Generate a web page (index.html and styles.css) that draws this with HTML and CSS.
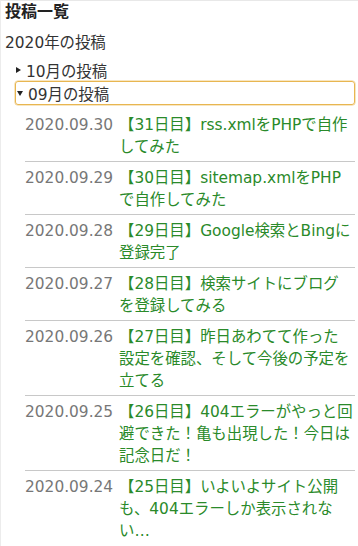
FILE: index.html
```html
<!DOCTYPE html>
<html lang="ja">
<head>
<meta charset="utf-8">
<link rel="stylesheet" href="styles.css">
</head>
<body>
<div class="panel">
  <h2 class="title">投稿一覧</h2>
  <div class="year">2020年の投稿</div>
  <div class="month"><span class="tri-right"></span><span>10月の投稿</span></div>
  <div class="month open"><span class="tri-down"></span><span>09月の投稿</span></div>
  <ul class="posts">
    <li class="post"><span class="date">2020.09.30</span><a class="link">【31日目】rss.xmlをPHPで自作してみた</a></li>
    <li class="post"><span class="date">2020.09.29</span><a class="link">【30日目】sitemap.xmlをPHPで自作してみた</a></li>
    <li class="post"><span class="date">2020.09.28</span><a class="link">【29日目】Google検索とBingに登録完了</a></li>
    <li class="post"><span class="date">2020.09.27</span><a class="link">【28日目】検索サイトにブログを登録してみる</a></li>
    <li class="post"><span class="date">2020.09.26</span><a class="link">【27日目】昨日あわてて作った設定を確認、そして今後の予定を立てる</a></li>
    <li class="post"><span class="date">2020.09.25</span><a class="link">【26日目】404エラーがやっと回避できた！亀も出現した！今日は記念日だ！</a></li>
    <li class="post last"><span class="date">2020.09.24</span><a class="link">【25日目】いよいよサイト公開も、404エラーしか表示されない…</a></li>
  </ul>
</div>
</body>
</html>
```

FILE: styles.css
```css
html, body {
  margin: 0;
  padding: 0;
  background: #fff;
}
body {
  font-family: "DejaVu Sans", "Noto Sans CJK JP", sans-serif;
  font-size: 15.4px;
  color: #333;
  width: 358px;
  height: 546px;
  overflow: hidden;
}
.panel {
  border-left: 1px solid #ececec;
  border-top: 1px solid #e8e8e8;
  padding-left: 4px;
  height: 545px;
}
.title {
  margin: 0;
  font-size: 16px;
  font-weight: bold;
  line-height: 22px;
  color: #222;
}
.year {
  margin-top: 9px;
  line-height: 22px;
  color: #333;
}
.month {
  display: flex;
  align-items: center;
  gap: 5px;
  margin-left: 10px;
  margin-right: 3px;
  padding-left: 1px;
  height: 22px;
  margin-top: 5px;
  color: #333;
}
.month.open {
  margin-top: 0;
  border: 1px solid #e8b651;
  border-radius: 3px;
  box-shadow: 0 0 0 0.5px #f0cd86;
  padding-left: 0;
}
.tri-right {
  width: 0;
  height: 0;
  border-left: 5px solid #222;
  border-top: 3px solid transparent;
  border-bottom: 3px solid transparent;
}
.tri-down {
  width: 0;
  height: 0;
  border-top: 5px solid #222;
  border-left: 3px solid transparent;
  border-right: 3px solid transparent;
  margin-left: 1px;
}
.posts {
  list-style: none;
  margin: 4px 3px 0 20px;
  padding: 0;
}
.post {
  display: flex;
  padding: 5px 0 3px;
  border-bottom: 1px solid #c8c8c8;
  line-height: 22px;
}
.post.last {
  border-bottom: none;
}
.date {
  flex: 0 0 94px;
  color: #777;
}
.link {
  flex: 0 0 234.5px;
  color: #2a8a2a;
  text-decoration: none;
}
```
